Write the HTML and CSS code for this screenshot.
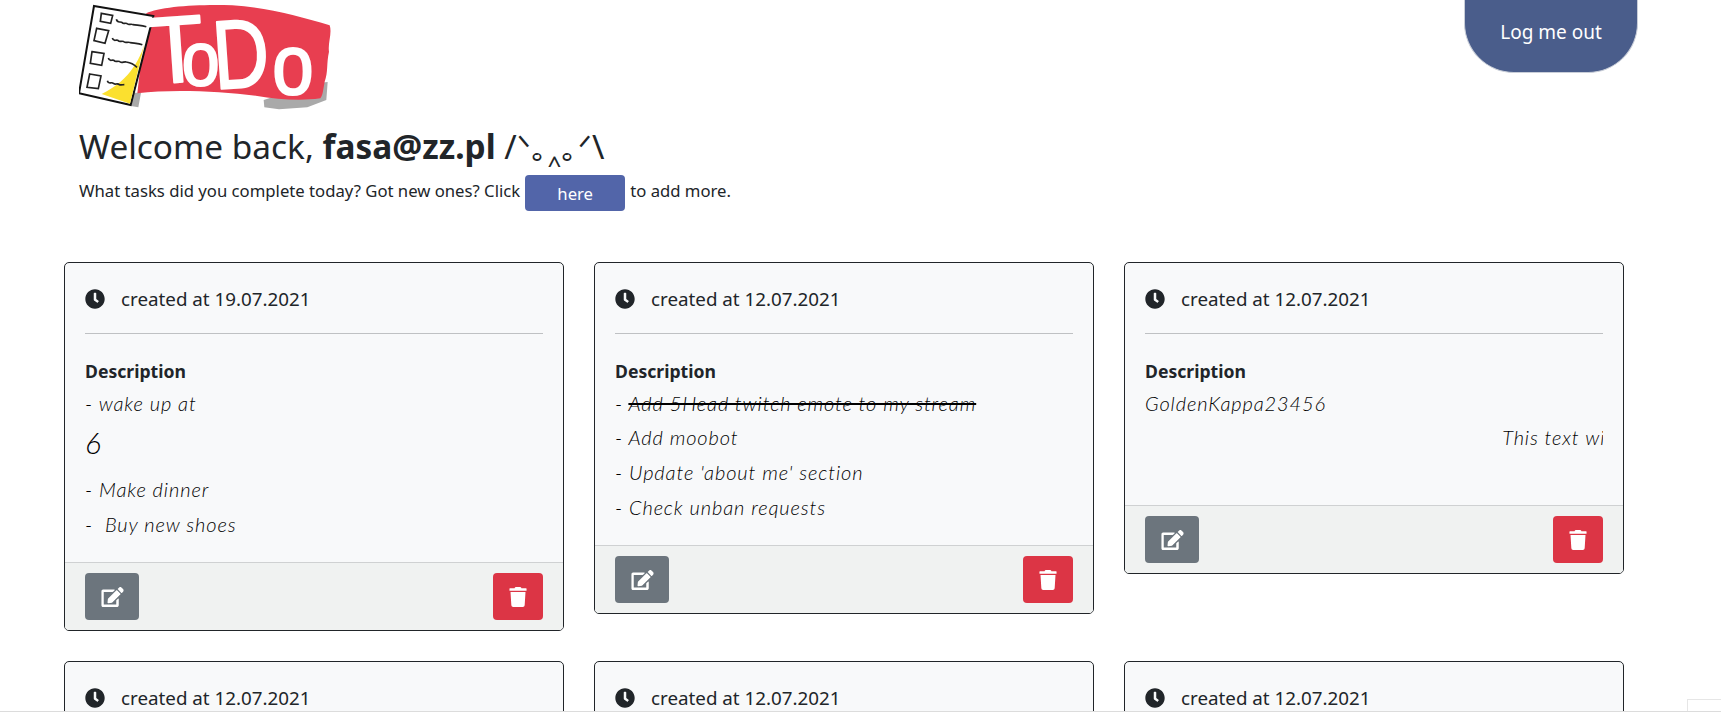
FILE: index.html
```html
<!DOCTYPE html>
<html lang="en">

<head>
    <meta charset="utf-8">
    <meta name="viewport" content="width=device-width, initial-scale=1.0">
    <title>ToDo</title>
    <link rel="stylesheet" href="styles.css">
</head>

<body>
    <header class="top">
        <div class="intro">
            <svg class="logo" viewBox="60 0 780 342" aria-label="ToDo logo">
                <path class="logo-shadow" d="M770 250 L806 246 L802 300 L745 322 L660 328 L616 322 L614 300 Z M216 318 L238 322 L246 278 L225 278 Z" />
                <path class="logo-banner" d="M262 40 C300 20 420 12 520 16 C620 22 720 48 812 76 C820 100 806 130 810 155 C802 190 808 215 797 245 C792 270 792 285 784 295 C720 304 660 298 590 287 C480 274 340 267 235 280 Z" />
                <path class="logo-paper" d="M105 18 L283 48 L215 315 L60 280 Z" />
                <path class="logo-fold" d="M263 105 C250 170 215 240 128 282 L213 311 Z" />
                <g class="logo-boxes">
                    <path d="M127 40 L161 46 L155 70 L124 64 Z" />
                    <path d="M113 85 L149 92 L138 130 L105 122 Z" />
                    <path d="M99 155 L135 160 L128 196 L94 190 Z" />
                    <path d="M92 222 L126 228 L118 266 L84 262 Z" />
                    <path d="M172 58 C176 72 184 62 190 68 C194 74 200 66 206 72 C210 76 216 70 222 74 C236 76 250 76 262 80" />
                    <path d="M160 114 C164 128 172 116 178 122 C182 128 190 120 196 126 C200 130 208 124 214 128 C228 130 240 130 250 134" />
                    <path d="M148 174 C152 188 160 176 166 182 C170 188 178 180 184 186 C188 190 196 184 202 186 C216 188 226 194 234 202" />
                    <path d="M145 242 C149 256 157 244 163 250 C167 256 175 248 181 254 C186 256 192 254 196 254" />
                </g>
                <g class="logo-word">
                    <text transform="translate(276 252) rotate(-4) scale(1 1.05)" font-size="270">T</text>
                    <text transform="translate(368 254) scale(.95 1.05)" font-size="215">o</text>
                    <text transform="translate(468 268) rotate(-4) scale(.8 1)" font-size="292">D</text>
                    <text transform="translate(640 282) scale(.95 1.1)" font-size="235">o</text>
                </g>
            </svg>
            <h2 class="welcome">Welcome back, <b>fasa@zz.pl</b> /ᐠ｡‸｡ᐟ\</h2>
            <p class="lead">What tasks did you complete today? Got new ones? Click <a class="here" href="#">here</a> to add more.</p>
        </div>
        <a class="logout" href="#">Log me out</a>
    </header>

    <main class="cards">
        <article class="card">
            <div class="card-body">
                <p class="created"><svg class="clock" viewBox="0 0 512 512"><use href="#i-clock" /></svg>created at 19.07.2021</p>
                <hr>
                <h5>Description</h5>
                <p class="task">- wake up at</p>
                <p class="task big">6</p>
                <p class="task">- Make dinner</p>
                <p class="task">-&nbsp; Buy new shoes</p>
            </div>
            <div class="card-foot">
                <a class="btn edit" href="#"><svg viewBox="0 0 576 512"><use href="#i-edit" /></svg></a>
                <a class="btn del" href="#"><svg viewBox="0 0 448 512"><use href="#i-trash" /></svg></a>
            </div>
        </article>

        <article class="card">
            <div class="card-body">
                <p class="created"><svg class="clock" viewBox="0 0 512 512"><use href="#i-clock" /></svg>created at 12.07.2021</p>
                <hr>
                <h5>Description</h5>
                <p class="task">- <s>Add 5Head twitch emote to my stream</s></p>
                <p class="task">- Add moobot</p>
                <p class="task">- Update 'about me' section</p>
                <p class="task">- Check unban requests</p>
            </div>
            <div class="card-foot">
                <a class="btn edit" href="#"><svg viewBox="0 0 576 512"><use href="#i-edit" /></svg></a>
                <a class="btn del" href="#"><svg viewBox="0 0 448 512"><use href="#i-trash" /></svg></a>
            </div>
        </article>

        <article class="card">
            <div class="card-body">
                <p class="created"><svg class="clock" viewBox="0 0 512 512"><use href="#i-clock" /></svg>created at 12.07.2021</p>
                <hr>
                <h5>Description</h5>
                <p class="task">GoldenKappa23456</p>
                <p class="task scroller">This text will scroll</p>
            </div>
            <div class="card-foot">
                <a class="btn edit" href="#"><svg viewBox="0 0 576 512"><use href="#i-edit" /></svg></a>
                <a class="btn del" href="#"><svg viewBox="0 0 448 512"><use href="#i-trash" /></svg></a>
            </div>
        </article>

        <article class="card">
            <div class="card-body">
                <p class="created"><svg class="clock" viewBox="0 0 512 512"><use href="#i-clock" /></svg>created at 12.07.2021</p>
                <hr>
            </div>
        </article>
        <article class="card">
            <div class="card-body">
                <p class="created"><svg class="clock" viewBox="0 0 512 512"><use href="#i-clock" /></svg>created at 12.07.2021</p>
                <hr>
            </div>
        </article>
        <article class="card">
            <div class="card-body">
                <p class="created"><svg class="clock" viewBox="0 0 512 512"><use href="#i-clock" /></svg>created at 12.07.2021</p>
                <hr>
            </div>
        </article>
    </main>

    <div class="corner"></div>
    <div class="bottom-line"></div>

    <svg class="sprites">
        <symbol id="i-clock" viewBox="0 0 512 512">
            <path d="M256,8C119,8,8,119,8,256S119,504,256,504,504,393,504,256,393,8,256,8Zm92.49,313h0l-20,25a16,16,0,0,1-22.49,2.5h0l-67-49.72a40,40,0,0,1-15-31.23V112a16,16,0,0,1,16-16h32a16,16,0,0,1,16,16V256l58,42.5A16,16,0,0,1,348.49,321Z" />
        </symbol>
        <symbol id="i-edit" viewBox="0 0 576 512">
            <path d="M402.6 83.2l90.2 90.2c3.8 3.8 3.8 10 0 13.8L274.4 405.6l-92.8 10.3c-12.4 1.4-22.9-9.1-21.5-21.5l10.3-92.8L388.8 83.2c3.8-3.8 10-3.8 13.8 0zm162-22.9l-48.8-48.8c-15.2-15.2-39.9-15.2-55.2 0l-35.4 35.4c-3.8 3.8-3.8 10 0 13.8l90.2 90.2c3.8 3.8 10 3.8 13.8 0l35.4-35.4c15.2-15.3 15.2-40 0-55.2zM384 346.2V448H64V128h229.8c3.2 0 6.2-1.3 8.5-3.5l40-40c7.6-7.6 2.2-20.5-8.5-20.5H48C21.5 64 0 85.5 0 112v352c0 26.5 21.5 48 48 48h352c26.5 0 48-21.5 48-48V306.2c0-10.7-12.9-16-20.5-8.5l-40 40c-2.2 2.3-3.5 5.3-3.5 8.5z" />
        </symbol>
        <symbol id="i-trash" viewBox="0 0 448 512">
            <path d="M432 32H312l-9.4-18.7A24 24 0 0 0 281.1 0H166.8a23.72 23.72 0 0 0-21.4 13.3L136 32H16A16 16 0 0 0 0 48v32a16 16 0 0 0 16 16h416a16 16 0 0 0 16-16V48a16 16 0 0 0-16-16zM53.2 467a48 48 0 0 0 47.9 45h245.8a48 48 0 0 0 47.9-45L416 128H32z" />
        </symbol>
    </svg>
</body>

</html>
```

FILE: styles.css
```css
html,
body {
    height: 712px;
    margin: 0;
    overflow: hidden;
}

body {
    background-color: #fff;
    color: #212529;
    font-family: "Noto Sans", "Open Sans", sans-serif;
    font-size: 16.7px;
}

.sprites {
    display: none;
}

/* top of the page */
.top {
    display: flex;
    justify-content: space-between;
    align-items: flex-start;
    height: 262px;
    padding: 0 83px 0 79px;
}

.logo {
    display: block;
    width: 260px;
    height: 114px;
}

.logo-banner {
    fill: #e83e50;
}

.logo-shadow {
    fill: #a9a9a9;
}

.logo-paper {
    fill: #fff;
    stroke: #111;
    stroke-width: 6;
}

.logo-fold {
    fill: #fbe02f;
}

.logo-boxes path {
    fill: none;
    stroke: #222;
    stroke-width: 5;
}

.logo-word text {
    fill: #fff;
    stroke: #fff;
    stroke-width: 6;
    stroke-linejoin: round;
    font-family: "Liberation Sans", sans-serif;
}

.welcome {
    margin: 10px 0 0;
    font-size: 33.4px;
    font-weight: 400;
    line-height: 44px;
}

.lead {
    display: flex;
    align-items: flex-start;
    gap: 5px;
    margin: 7px 0 0;
    height: 36px;
    line-height: 32px;
    white-space: nowrap;
}

.here {
    width: 100px;
    height: 36px;
    border-radius: 4px;
    background-color: #5265a9;
    color: #fff;
    line-height: 38px;
    text-align: center;
    text-decoration: none;
}

.logout {
    box-sizing: border-box;
    width: 174px;
    height: 73px;
    padding-top: 19px;
    border: 1px solid #c9ced8;
    border-top: 0;
    border-radius: 0 0 50px 50px;
    background-color: #4a5d8b;
    color: #fff;
    font-size: 19px;
    text-align: center;
    text-decoration: none;
}

/* the cards */
.cards {
    display: grid;
    grid-template-columns: repeat(3, 500px);
    column-gap: 30px;
    row-gap: 30px;
    align-items: start;
    padding-left: 64px;
}

.card {
    border: 1px solid #212529;
    border-radius: 5px;
    background-color: #f8f9fa;
    overflow: hidden;
}

.card-body {
    padding: 23px 20px 20px;
}

.created {
    display: flex;
    align-items: center;
    margin: 0;
    font-size: 18.8px;
    line-height: 26px;
}

.clock {
    width: 20px;
    height: 20px;
    margin-right: 16px;
    fill: #212529;
}

hr {
    margin: 21px 0 24px;
    border: 0;
    border-top: 1px solid #bfc1c3;
}

h5 {
    margin: 0 0 1px;
    font-size: 17.6px;
    font-weight: 700;
    line-height: 27px;
}

.task {
    margin: 0;
    color: #000;
    font-family: "Lato", "Roboto", sans-serif;
    font-style: italic;
    font-weight: 300;
    font-size: 20px;
    letter-spacing: 0.9px;
    line-height: 34px;
    white-space: nowrap;
}

.big {
    font-size: 30px;
    line-height: 44px;
    padding-bottom: 8px;
}

.task + .task:not(.big) {
    line-height: 35px;
}

.scroller {
    overflow: hidden;
    margin-bottom: 30px;
    padding-left: 78%;
}

.card-foot {
    display: flex;
    justify-content: space-between;
    padding: 10px 20px;
    border-top: 1px solid #cfd1d2;
    background-color: #f0f2f1;
}

.btn {
    display: flex;
    align-items: center;
    justify-content: center;
    height: 47px;
    border-radius: 4px;
}

.btn svg {
    height: 20px;
    fill: #fff;
}

.edit {
    width: 54px;
    background-color: #6c757d;
}

.edit svg {
    width: 23px;
}

.del {
    width: 50px;
    background-color: #dc3545;
}

.del svg {
    width: 18px;
}

/* bits of the window over the page */
.corner {
    position: fixed;
    right: 0;
    bottom: 0;
    width: 33px;
    height: 11px;
    border: 1px solid #e6e6e6;
    border-right: 0;
    background-color: #fff;
}

.bottom-line {
    position: fixed;
    left: 0;
    right: 0;
    bottom: 0;
    height: 1px;
    background-color: #dcdcdc;
}
```
